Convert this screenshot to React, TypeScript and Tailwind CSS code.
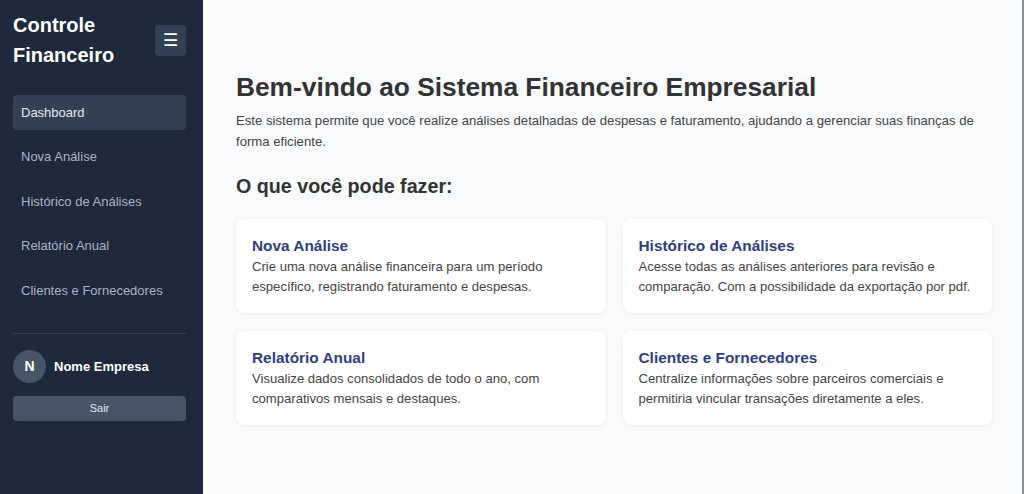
import React from "react";

const navItems = ["Dashboard", "Nova Análise", "Histórico de Análises", "Relatório Anual", "Clientes e Fornecedores"];

const cards = [
  { title: "Nova Análise", text: "Crie uma nova análise financeira para um período específico, registrando faturamento e despesas." },
  { title: "Histórico de Análises", text: "Acesse todas as análises anteriores para revisão e comparação. Com a possibilidade da exportação por pdf." },
  { title: "Relatório Anual", text: "Visualize dados consolidados de todo o ano, com comparativos mensais e destaques." },
  { title: "Clientes e Fornecedores", text: "Centralize informações sobre parceiros comerciais e permitiria vincular transações diretamente a eles." },
];

const Sidebar: React.FC = () => {
  return (
    <aside className="w-[203px] shrink-0 bg-[#1e293b] pl-[13px] pr-[17px] pt-[10px] flex flex-col">
      <div className="flex items-center justify-between h-[60px]">
        <h1 className="text-[20px] leading-[30px] font-bold text-white">
          Controle
          <br />
          Financeiro
        </h1>
        <button className="w-[31px] h-[31px] rounded bg-[#334155] text-white text-[17px] leading-none flex items-center justify-center">
          ☰
        </button>
      </div>

      <nav className="mt-[25px] flex flex-col gap-[9.5px]">
        {navItems.map((item, i) => (
          <a
            key={item}
            className={`h-[35px] flex items-center px-2 rounded text-[13px] ${i === 0 ? "bg-[#334155] text-[#e2e8f0]" : "text-[#aab4c3]"}`}
          >
            {item}
          </a>
        ))}
      </nav>

      <div className="mt-[25px] border-t border-[#334155] pt-[16px]">
        <div className="flex items-center gap-[8px]">
          <div className="w-[33px] h-[33px] rounded-full bg-[#475569] flex items-center justify-center text-white font-bold text-[14px]">
            N
          </div>
          <span className="text-white font-bold text-[13px]">Nome Empresa</span>
        </div>
        <button className="mt-[13px] w-full h-[25px] rounded bg-[#475569] text-[#e2e8f0] text-[11px]">Sair</button>
      </div>
    </aside>
  );
};

export default function App() {
  return (
    <div className="flex h-[494px] w-full overflow-hidden border-r-2 border-[#8b9099]" style={{ fontFamily: '"Liberation Sans", Arial, sans-serif' }}>
      <Sidebar />
      <main className="flex-1 bg-[#f8fafc] pl-[33px] pr-[30px] pt-[72px]">
        <h1 className="text-[26.3px] leading-[31px] font-bold text-[#333333]">Bem-vindo ao Sistema Financeiro Empresarial</h1>
        <p className="mt-[7px] text-[13.15px] leading-[21px] text-[#444444]">
          Este sistema permite que você realize análises detalhadas de despesas e faturamento, ajudando a gerenciar suas finanças de forma eficiente.
        </p>
        <h2 className="mt-[23px] text-[19.7px] leading-[23px] font-bold text-[#333333]">O que você pode fazer:</h2>
        <div className="mt-[21px] grid grid-cols-2 gap-x-[17px] gap-y-[18px]">
          {cards.map((c) => (
            <div key={c.title} className="bg-white rounded-lg shadow-[0_1px_4px_rgba(0,0,0,0.06)] px-4 pt-[18px] pb-[16px]">
              <h3 className="text-[15.4px] leading-[18px] font-bold text-[#2f3e84]">{c.title}</h3>
              <p className="mt-[2px] text-[13.1px] leading-[20px] text-[#444444]">{c.text}</p>
            </div>
          ))}
        </div>
      </main>
    </div>
  );
}
